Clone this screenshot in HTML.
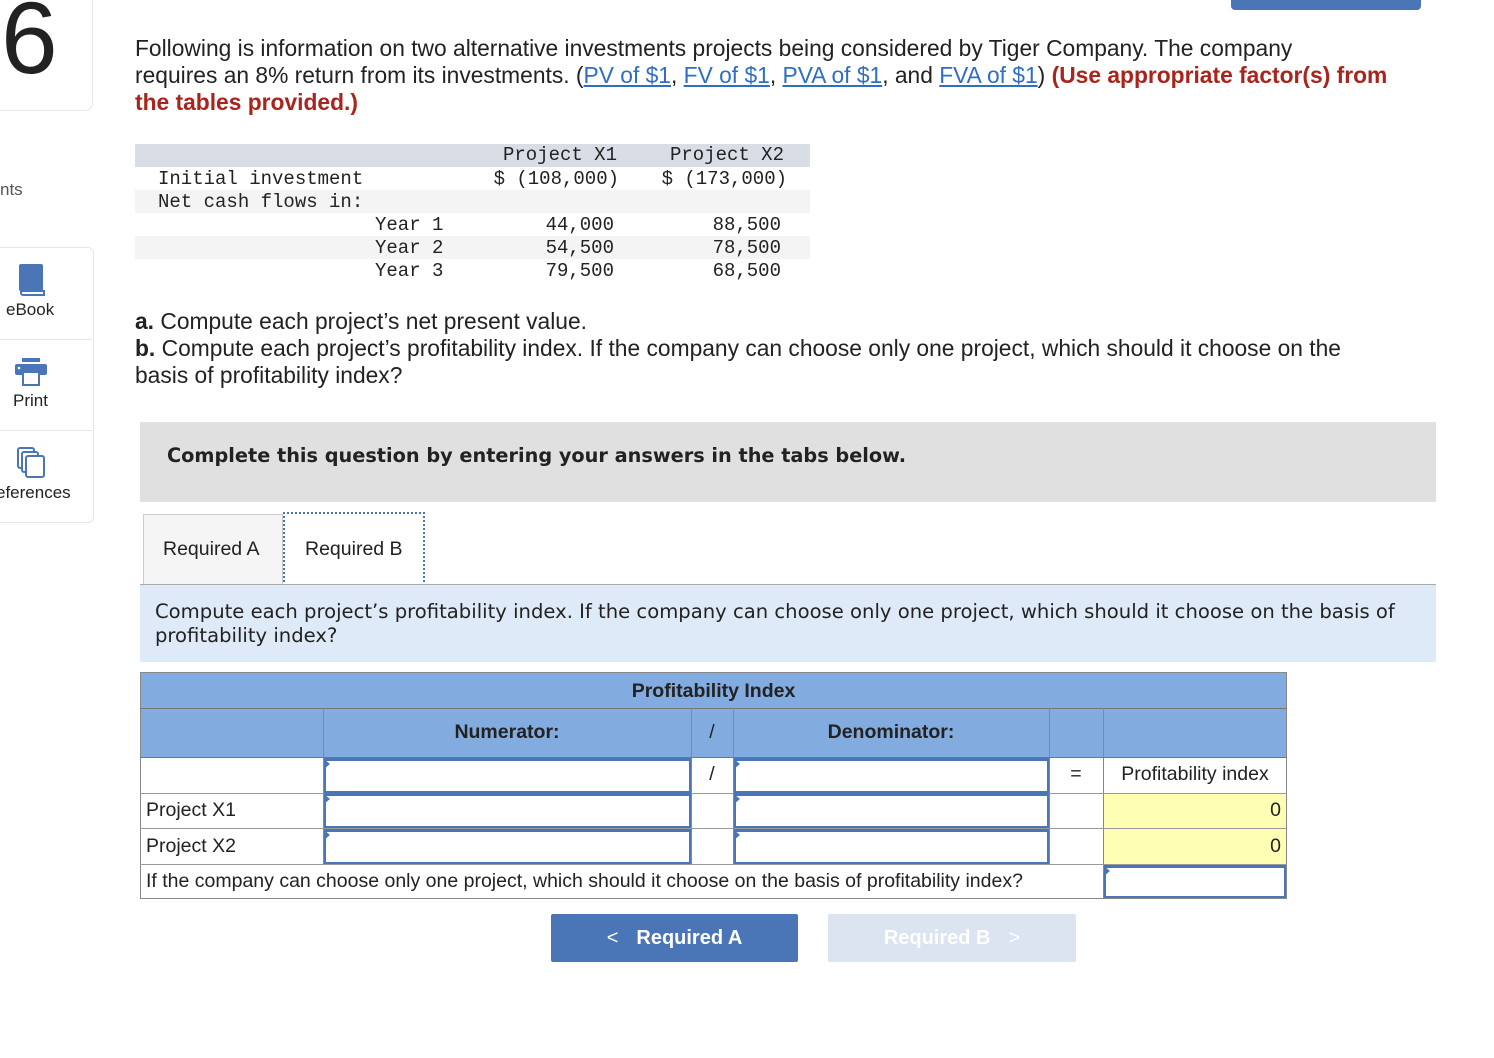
<!DOCTYPE html>
<html><head><style>
body{margin:0;width:1494px;height:1058px;background:#fff;font-family:"Liberation Sans",Arial,sans-serif;color:#222;position:relative;overflow:hidden}
.a{position:absolute}
a{color:#2f6ec5;text-decoration:underline}
.mono{font-family:"Liberation Mono",monospace;font-size:19px;color:#222}
.cell{position:absolute;box-sizing:border-box}
.inp{position:absolute;box-sizing:border-box;border:2px solid #4a76b8;border-top-width:3px;background:#fff}
.inp:before{content:"";position:absolute;left:-2px;top:-2px;border-left:6px solid #4a76b8;border-top:5px solid transparent;border-bottom:5px solid transparent}
.t{font-size:19.5px}
</style></head><body>
<div class="a" style="left:1231px;top:0;width:190px;height:10px;background:#4a76b8;border-radius:0 0 4px 4px"></div>
<div class="a" style="left:-10px;top:-10px;width:101px;height:119px;border:1px solid #e6e6e6;border-radius:8px"></div>
<div class="a" style="left:1px;top:-22px;font-size:102px;color:#222;line-height:120px">6</div>
<div class="a" style="left:0;top:180px;font-size:17px;color:#555">nts</div>
<div class="a" style="left:-10px;top:247px;width:102px;height:274px;border:1px solid #e6e6e6;border-radius:6px"></div>
<div class="a" style="left:0;top:339px;width:92px;border-top:1px solid #e6e6e6"></div>
<div class="a" style="left:0;top:430px;width:92px;border-top:1px solid #e6e6e6"></div>
<svg class="a" style="left:18px;top:264px" width="28" height="32"><rect x="1" y="0" width="24" height="27" rx="2" fill="#4a76b8"/><path d="M3 27h23v4H5a2 2 0 0 1-2-2z" fill="#fff" stroke="#4a76b8" stroke-width="2"/></svg>
<div class="a" style="left:6px;top:300px;font-size:17px">eBook</div>
<svg class="a" style="left:15px;top:358px" width="32" height="28"><rect x="7" y="0" width="18" height="4" fill="#4a76b8"/><rect x="0" y="6" width="32" height="11" rx="2" fill="#4a76b8"/><rect x="8" y="14" width="16" height="13" fill="#fff" stroke="#4a76b8" stroke-width="2"/><circle cx="4" cy="10" r="1.3" fill="#fff"/></svg>
<div class="a" style="left:13px;top:391px;font-size:17px">Print</div>
<svg class="a" style="left:17px;top:447px" width="30" height="32"><rect x="1" y="1" width="16" height="20" rx="2" fill="#fff" stroke="#4a76b8" stroke-width="2"/><rect x="5" y="5" width="16" height="20" rx="2" fill="#fff" stroke="#4a76b8" stroke-width="2"/><rect x="9" y="9" width="18" height="21" rx="2" fill="#fff" stroke="#4a76b8" stroke-width="2"/></svg>
<div class="a" style="left:-4px;top:483px;font-size:17px">eferences</div>

<div class="a" style="left:135px;top:35px;width:1262px;font-size:22.8px;line-height:27px;color:#222">Following is information on two alternative investments projects being considered by Tiger Company. The company<br>requires an 8% return from its investments. (<a>PV of $1</a>, <a>FV of $1</a>, <a>PVA of $1</a>, and <a>FVA of $1</a>) <b style="color:#a8241c">(Use appropriate factor(s) from<br>the tables provided.)</b></div>

<div class="a" style="left:135px;top:144px;width:675px;height:23px;background:#d9dde5"></div>
<div class="a" style="left:135px;top:190px;width:675px;height:23px;background:#f4f4f4"></div>
<div class="a" style="left:135px;top:236px;width:675px;height:23px;background:#f4f4f4"></div>
<div class="a mono" style="left:0;top:144px;width:617px;text-align:right">Project X1</div>
<div class="a mono" style="left:0;top:144px;width:784px;text-align:right">Project X2</div>
<div class="a mono" style="left:158px;top:168px">Initial investment</div>
<div class="a mono" style="left:0;top:168px;width:619px;text-align:right">$ (108,000)</div>
<div class="a mono" style="left:0;top:168px;width:787px;text-align:right">$ (173,000)</div>
<div class="a mono" style="left:158px;top:191px">Net cash flows in:</div>
<div class="a mono" style="left:375px;top:214px;line-height:23px">Year 1<br>Year 2<br>Year 3</div>
<div class="a mono" style="left:0;top:214px;width:614px;text-align:right;line-height:23px">44,000<br>54,500<br>79,500</div>
<div class="a mono" style="left:0;top:214px;width:781px;text-align:right;line-height:23px">88,500<br>78,500<br>68,500</div>

<div class="a" style="left:135px;top:308px;width:1300px;font-size:22.8px;line-height:27px"><b>a.</b> Compute each project’s net present value.<br><b>b.</b> Compute each project’s profitability index. If the company can choose only one project, which should it choose on the<br>basis of profitability index?</div>

<div class="a" style="left:140px;top:422px;width:1296px;height:80px;background:#e0e0e0"></div>
<div class="a" style="left:167px;top:444px;font-weight:bold;font-family:'DejaVu Sans',sans-serif;font-size:19.3px">Complete this question by entering your answers in the tabs below.</div>

<div class="a" style="left:143px;top:514px;width:140px;height:70px;box-sizing:border-box;border:1px solid #ccc;border-bottom:none;background:#f5f5f5"></div>
<div class="a" style="left:163px;top:538px;font-size:19.5px">Required A</div>
<div class="a" style="left:283px;top:512px;width:142px;height:74px;box-sizing:border-box;border:2px dotted #4a76b8;background:#fff"></div>
<div class="a" style="left:305px;top:538px;font-size:19.5px">Required B</div>
<div class="a" style="left:140px;top:584px;width:1296px;height:1px;background:#aaa"></div>
<div class="a" style="left:140px;top:585px;width:1296px;height:77px;background:#deeaf7"></div>
<div class="a" style="left:155px;top:600px;width:1270px;line-height:24px;font-family:'DejaVu Sans',sans-serif;font-size:19.6px">Compute each project’s profitability index. If the company can choose only one project, which should it choose on the basis of profitability index?</div>

<div class="cell" style="left:140px;top:672px;width:1147px;height:227px;border:1px solid #888"></div>
<div class="cell" style="left:141px;top:673px;width:1145px;height:84px;background:#82abdf"></div>
<div class="a" style="left:140px;top:708px;width:1147px;height:1px;background:#777"></div>
<div class="a t" style="left:140px;top:680px;width:1147px;text-align:center;font-weight:bold">Profitability Index</div>
<div class="a" style="left:323px;top:708px;width:1px;height:156px;background:#888"></div>
<div class="a" style="left:691px;top:708px;width:1px;height:156px;background:#888"></div>
<div class="a" style="left:733px;top:708px;width:1px;height:156px;background:#888"></div>
<div class="a" style="left:1049px;top:708px;width:1px;height:156px;background:#888"></div>
<div class="a" style="left:1103px;top:708px;width:1px;height:190px;background:#888"></div>
<div class="a" style="left:140px;top:757px;width:1147px;height:1px;background:#777"></div>
<div class="a" style="left:140px;top:793px;width:1147px;height:1px;background:#999"></div>
<div class="a" style="left:140px;top:828px;width:1147px;height:1px;background:#999"></div>
<div class="a" style="left:140px;top:864px;width:1147px;height:1px;background:#999"></div>
<div class="a t" style="left:323px;top:721px;width:368px;text-align:center;font-weight:bold">Numerator:</div>
<div class="a t" style="left:691px;top:721px;width:42px;text-align:center">/</div>
<div class="a t" style="left:733px;top:721px;width:316px;text-align:center;font-weight:bold">Denominator:</div>
<div class="inp" style="left:324px;top:758px;width:367px;height:35px"></div>
<div class="inp" style="left:324px;top:793px;width:367px;height:35px"></div>
<div class="inp" style="left:324px;top:829px;width:367px;height:35px"></div>
<div class="inp" style="left:734px;top:758px;width:315px;height:35px"></div>
<div class="inp" style="left:734px;top:793px;width:315px;height:35px"></div>
<div class="inp" style="left:734px;top:829px;width:315px;height:35px"></div>
<div class="a t" style="left:691px;top:763px;width:42px;text-align:center">/</div>
<div class="a t" style="left:1049px;top:763px;width:54px;text-align:center">=</div>
<div class="a t" style="left:1104px;top:763px;width:182px;text-align:center">Profitability index</div>
<div class="a" style="left:1104px;top:794px;width:182px;height:34px;background:#ffffb3"></div>
<div class="a" style="left:1104px;top:829px;width:182px;height:35px;background:#ffffb3"></div>
<div class="a t" style="left:1104px;top:799px;width:177px;text-align:right">0</div>
<div class="a t" style="left:1104px;top:835px;width:177px;text-align:right">0</div>
<div class="a t" style="left:146px;top:799px">Project X1</div>
<div class="a t" style="left:146px;top:835px">Project X2</div>
<div class="a t" style="left:146px;top:870px">If the company can choose only one project, which should it choose on the basis of profitability index?</div>
<div class="inp" style="left:1104px;top:865px;width:182px;height:33px"></div>

<div class="a" style="left:551px;top:914px;width:247px;height:48px;background:#4a76b8;border-radius:2px;color:#fff;font-weight:bold;font-size:20px;line-height:48px;text-align:center"><span style="font-weight:normal;margin-right:18px">&lt;</span>Required A</div>
<div class="a" style="left:828px;top:914px;width:248px;height:48px;background:#dbe4f0;border-radius:2px;color:#fff;font-weight:bold;font-size:20px;line-height:48px;text-align:center">Required B<span style="font-weight:normal;margin-left:18px">&gt;</span></div>
</body></html>
